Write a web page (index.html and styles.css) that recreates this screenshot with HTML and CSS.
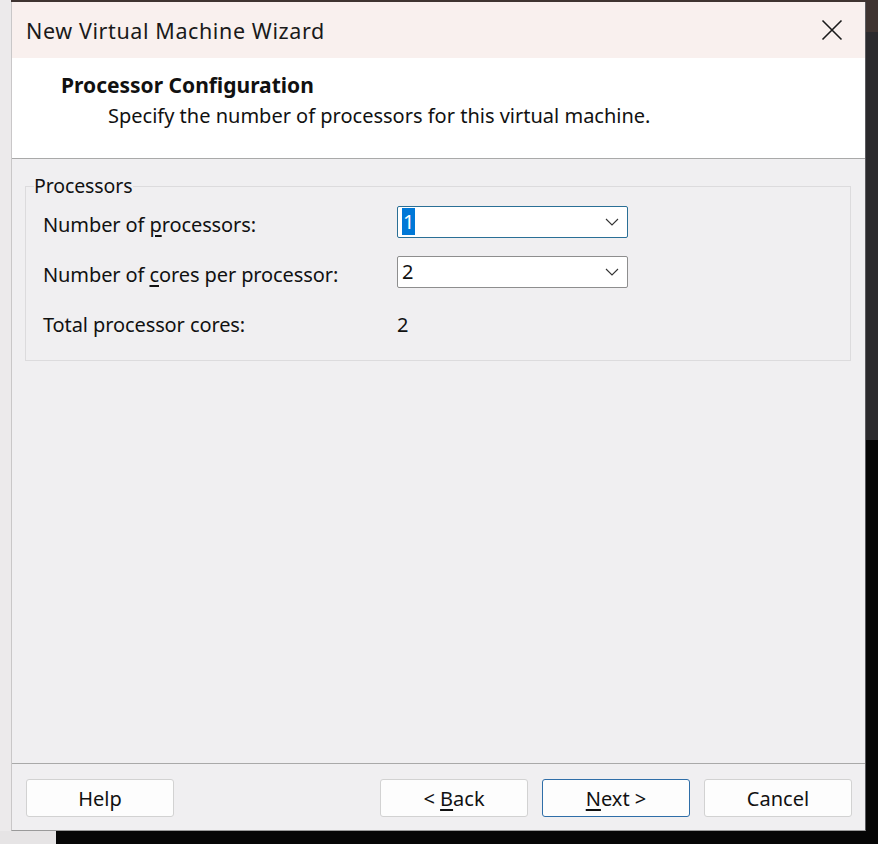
FILE: index.html
```html
<!DOCTYPE html>
<html>
<head>
<meta charset="utf-8">
<link rel="stylesheet" href="styles.css">
</head>
<body>
<div class="desktop">
  <div class="window">
    <div class="titlebar">
      <span class="title">New Virtual Machine Wizard</span>
      <span class="close">
        <svg width="22" height="22" viewBox="0 0 22 22"><path d="M1.5 1.5 L20.5 20.5 M20.5 1.5 L1.5 20.5" stroke="#1a1a1a" stroke-width="1.6" fill="none"/></svg>
      </span>
    </div>
    <div class="header">
      <div class="h-title">Processor Configuration</div>
      <div class="h-sub">Specify the number of processors for this virtual machine.</div>
    </div>
    <div class="content">
      <fieldset class="group">
        <legend>Processors</legend>
        <div class="row">
          <span class="label">Number of <u>p</u>rocessors:</span>
          <div class="combo focused"><span class="val sel">1</span>
            <svg class="chev" width="14" height="8" viewBox="0 0 14 8"><path d="M1 1 L7 7 L13 1" stroke="#333" stroke-width="1.1" fill="none"/></svg>
          </div>
        </div>
        <div class="row">
          <span class="label">Number of <u>c</u>ores per processor:</span>
          <div class="combo"><span class="val">2</span>
            <svg class="chev" width="14" height="8" viewBox="0 0 14 8"><path d="M1 1 L7 7 L13 1" stroke="#333" stroke-width="1.1" fill="none"/></svg>
          </div>
        </div>
        <div class="row">
          <span class="label">Total processor cores:</span>
          <span class="tval">2</span>
        </div>
      </fieldset>
    </div>
    <div class="footer">
      <button class="btn">Help</button>
      <div class="spacer"></div>
      <button class="btn">&lt; <u>B</u>ack</button>
      <button class="btn primary"><u>N</u>ext &gt;</button>
      <button class="btn">Cancel</button>
    </div>
  </div>
</div>
</body>
</html>
```

FILE: styles.css
```css
* { box-sizing: border-box; }
html, body { margin: 0; padding: 0; }
body {
  width: 878px;
  height: 844px;
  overflow: hidden;
  font-family: "Noto Sans", "Open Sans", sans-serif;
  color: #111;
  background:
    linear-gradient(to right, #eceaeb 0 11px, transparent 11px),
    linear-gradient(to bottom, #3f3431 0 32px, #2b2a2d 32px 440px, #060606 440px);
}
.desktop {
  height: 844px;
  padding: 2px 0 0 11px;
  background: linear-gradient(to bottom, transparent 0 831px, #e6e4e5 831px) no-repeat 0 0 / 56px 844px;
}
.window {
  width: 855px;
  height: 829px;
  display: flex;
  flex-direction: column;
  background: #f0eff1;
  border-left: 1px solid #c9c7c8;
  border-right: 1px solid #5a5a5e;
  border-bottom: 1px solid #9a9a9a;
}
.titlebar {
  height: 56px;
  flex: none;
  background: #f9f0ee;
  display: flex;
  align-items: center;
  justify-content: space-between;
  padding: 0 22px 0 14px;
}
.title {
  font-size: 21.5px;
  letter-spacing: 0.6px;
  color: #1a1a1a;
}
.close { display: flex; }
.header {
  height: 101px;
  flex: none;
  background: #ffffff;
  border-bottom: 1px solid #a9a9a9;
  padding: 13px 0 0 49px;
}
.h-title {
  font-weight: bold;
  font-size: 21px;
  line-height: 28px;
}
.h-sub {
  font-size: 20px;
  line-height: 28px;
  padding-left: 47px;
  margin-top: 3px;
}
.content {
  flex: 1;
  padding: 16px 14px 0 13px;
}
.group {
  margin: 0;
  border: 1px solid #dcdbdd;
  padding: 2px 0 11px 17px;
}
.group legend {
  font-size: 19.5px;
  line-height: 22px;
  padding: 0;
  margin-left: -9px;
  letter-spacing: -0.1px;
}
.row {
  display: flex;
  align-items: center;
  height: 50px;
}
.label {
  width: 354px;
  font-size: 20px;
  letter-spacing: -0.1px;
}
.label u { text-underline-offset: 3px; }
.combo {
  width: 231px;
  height: 32px;
  margin-bottom: 5px;
  background: #fff;
  border: 1px solid #8e8e8e;
  border-radius: 2px;
  display: flex;
  align-items: center;
  justify-content: space-between;
  padding: 0 8px 0 4px;
  font-size: 20px;
}
.combo.focused { border-color: #2a6f96; }
.val { line-height: 27px; }
.val.sel { background: #0078d7; color: #fff; padding: 0 1px; }
.tval { font-size: 20px; }
.footer {
  height: 67px;
  flex: none;
  border-top: 1px solid #a9a9a9;
  display: flex;
  align-items: flex-start;
  padding: 15px 13px 0 14px;
  gap: 14px;
}
.spacer { flex: 1; }
.btn {
  width: 148px;
  height: 38px;
  background: #fdfdfd;
  border: 1px solid #d2d2d2;
  border-radius: 3px;
  font-family: "Noto Sans", "Open Sans", sans-serif;
  font-size: 20px;
  color: #111;
  padding: 0;
}
.btn.primary { border-color: #2f6ea8; }
.btn u { text-underline-offset: 3px; }
```
